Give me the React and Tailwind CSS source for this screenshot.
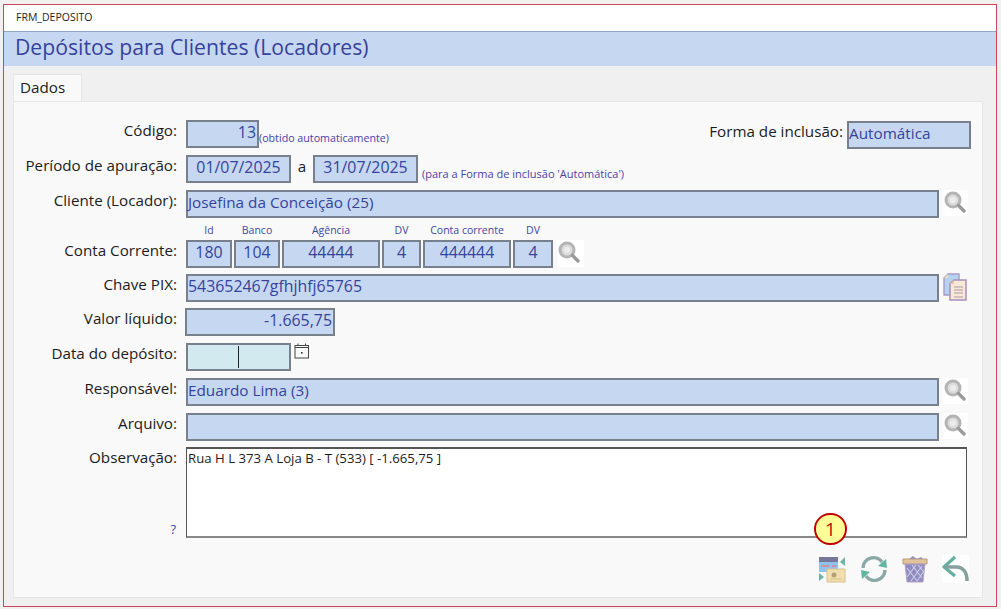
import React from "react";

function Field({ className = "", align = "text-left", size = "text-[15.3px]", children }) {
  return (
    <div className={`h-[28px] shrink-0 border-2 border-[#77808c] bg-[#c6d8f1] leading-[20px] text-[#36429c] whitespace-nowrap ${size} ${align} ${className}`}>
      {children}
    </div>
  );
}

function Label({ children }) {
  return (
    <div className="w-[163px] shrink-0 text-right text-[15.2px] leading-[20px] text-[#1c1c1c] whitespace-nowrap">
      {children}
    </div>
  );
}

function Magnifier({ className = "ml-[4px] h-[26px] w-[25px]" }) {
  return (
    <div className={`shrink-0 bg-white ${className}`}>
      <svg width="25" height="26" viewBox="1 1 25 26" className="blur-[0.4px]">
        <circle cx="11" cy="11" r="7" fill="#dcdcdc" stroke="#b4b4b4" strokeWidth="3" />
        <circle cx="11" cy="11" r="3" fill="#ededed" />
        <path d="M16.5 16.5 L22 22" stroke="#9a9a9a" strokeWidth="3.4" strokeLinecap="round" />
      </svg>
    </div>
  );
}

function CopyIcon() {
  return (
    <svg width="25" height="29" viewBox="0 0 25 29" className="ml-[4px] -mt-[1px] shrink-0 blur-[0.3px]">
      <path d="M5 1 H16 V22 H1 V5 Z" fill="#b5d2f0" stroke="#a99bc4" strokeWidth="1.4" />
      <path d="M1 5 H5 V1 Z" fill="#f2dcc0" />
      <path d="M11 7 H23 V27 H7 V11 Z" fill="#f8e8d8" stroke="#a98fb8" strokeWidth="1.5" />
      <path d="M7 11 H11 V7 Z" fill="#e3c9a8" />
      <path d="M11 14 H20 M11 17 H20 M11 20 H20 M11 24 H20" stroke="#a99ca8" strokeWidth="1.2" />
    </svg>
  );
}

function CalendarIcon() {
  return (
    <svg width="16" height="16" viewBox="0 0 16 16" className="ml-[3px] shrink-0">
      <rect x="1" y="2.5" width="13.5" height="12.5" fill="none" stroke="#444" strokeWidth="1" />
      <path d="M1 4.5 H14.5 M4 0.5 V3 M11.5 0.5 V3" stroke="#444" strokeWidth="1" />
      <rect x="7" y="9" width="1.6" height="1.6" fill="#333" />
    </svg>
  );
}

function CardsIcon() {
  return (
    <svg width="28" height="28" viewBox="0 0 28 28" className="blur-[0.4px]">
      <path d="M1 2 H20 V17 H1 Z" fill="#8fc3ee" />
      <path d="M1 2 H20 V7 H1 Z" fill="#77779a" />
      <path d="M3 11 H11 M14 11 H18" stroke="#e5808a" strokeWidth="1.6" />
      <path d="M9 14 H27 V27 H9 Z" fill="#f1dfae" stroke="#d6c18e" strokeWidth="1" />
      <circle cx="16" cy="20" r="2.5" fill="#b89f78" />
      <path d="M12 24 H24" stroke="#d6c18e" strokeWidth="1" />
      <path d="M27 2 L22 7 L27 11 Z" fill="#6eb5a5" />
      <path d="M1 18 L6 22 L1 26 Z" fill="#6eb5a5" />
    </svg>
  );
}

function SyncIcon() {
  return (
    <svg width="28" height="28" viewBox="0 0 28 28" fill="none" className="blur-[0.4px]">
      <path d="M3 13 A10.5 10.5 0 0 1 22 7" stroke="#8aa8a8" strokeWidth="3.4" />
      <path d="M18 11 L27 13 L26 4 Z" fill="#62b7a2" />
      <path d="M25 15 A10.5 10.5 0 0 1 6 21" stroke="#8aa8a8" strokeWidth="3.4" />
      <path d="M10 17 L1 15 L2 24 Z" fill="#62b7a2" />
    </svg>
  );
}

function TrashIcon() {
  return (
    <svg width="26" height="28" viewBox="0 0 26 28" className="blur-[0.4px]">
      <path d="M1 4 H25 V9 H1 Z" fill="#e2c49c" stroke="#b89a78" strokeWidth="1" />
      <path d="M7 4 L11 1 L15 4 L19 2 L21 4 Z" fill="#9a96b8" />
      <path d="M3 9 H23 L21 27 H5 Z" fill="#8f8cc0" stroke="#b9a3c4" strokeWidth="1" />
      <path d="M5 13 L15 26 M10 10 L20 23 M16 10 L22 17 M20 11 L9 26 M14 10 L5 22 M22 16 L15 26" stroke="#d0cde8" strokeWidth="1.1" />
    </svg>
  );
}

function BackIcon() {
  return (
    <div className="h-[28px] w-[27px] bg-white">
      <svg width="27" height="28" viewBox="0 0 27 28" fill="none" className="blur-[0.4px]">
        <path d="M13 2 L2 12 L13 21" stroke="#63b09f" strokeWidth="3.2" strokeLinejoin="round" />
        <path d="M3 12 H14 C21 12 25 17 25 26" stroke="#86a0a0" strokeWidth="3.6" />
      </svg>
    </div>
  );
}

function Caption({ className = "", children }) {
  return (
    <div className={`shrink-0 text-center text-[10.5px] leading-[16px] text-[#3c48a0] whitespace-nowrap ${className}`}>
      {children}
    </div>
  );
}

export default function App() {
  return (
    <div
      className="h-[609px] w-[1001px] overflow-hidden bg-[#f0f0f0] pb-[2px] pl-[3px] pr-[4px] pt-[4px]"
      style={{ fontFamily: '"Open Sans", "Noto Sans", sans-serif' }}
    >
      <div className="flex h-full flex-col border border-[#c9485b] bg-[#f0f0f0]">
        <div className="h-[26px] shrink-0 bg-white pl-[12px] text-[10.5px] leading-[25px] text-[#222]">
          FRM_DEPOSITO
        </div>
        <div className="h-[35px] shrink-0 border-t border-[#8fa9cc] bg-[#c6d8f1] pl-[11px] text-[21.2px] leading-[30px] text-[#36429c]">
          Depósitos para Clientes (Locadores)
        </div>

        <div className="flex flex-1 flex-col pb-[8px] pl-[9px] pr-[13px] pt-[8px]">
          <div className="h-[27px] w-[69px] shrink-0 border-x border-t border-[#e6e6e6] bg-[#f9f9f9] pl-[6px] text-[15.2px] leading-[25px] text-[#1c1c1c]">
            Dados
          </div>

          <div className="relative flex flex-1 flex-col border border-[#e6e6e6] bg-[#f9f9f9] pt-[18px]">
            {/* Codigo */}
            <div className="flex h-[28px] items-start">
              <Label>Código:</Label>
              <Field className="ml-[9px] w-[73px] pr-[1px]" align="text-right" size="text-[15.9px]">13</Field>
              <div className="mt-[10px] text-[10.7px] leading-[16px] text-[#4a3fa8] whitespace-nowrap">(obtido automaticamente)</div>
              <div className="ml-auto mr-[11px] mt-[1px] flex items-start">
                <div className="text-[15.2px] leading-[20px] text-[#1c1c1c] whitespace-nowrap">Forma de inclusão:</div>
                <Field className="ml-[4px] w-[124px]">Automática</Field>
              </div>
            </div>

            {/* Periodo */}
            <div className="mt-[7px] flex h-[28px] items-start">
              <Label>Período de apuração:</Label>
              <Field className="ml-[9px] w-[105px]" align="text-center" size="text-[15.9px]">01/07/2025</Field>
              <div className="w-[22px] text-center text-[15.2px] leading-[22px] text-[#1c1c1c]">a</div>
              <Field className="w-[105px]" align="text-center" size="text-[15.9px]">31/07/2025</Field>
              <div className="ml-[4px] mt-[11px] text-[11px] leading-[16px] text-[#4a3fa8] whitespace-nowrap">
                (para a Forma de inclusão 'Automática')
              </div>
            </div>

            {/* Cliente */}
            <div className="mt-[7px] flex h-[28px] items-start">
              <Label>Cliente (Locador):</Label>
              <Field className="ml-[9px] w-[753px]">Josefina da Conceição (25)</Field>
              <Magnifier />
            </div>

            {/* Captions */}
            <div className="mt-[4px] flex h-[18px] gap-[2px] pl-[172px]">
              <Caption className="w-[46px]">Id</Caption>
              <Caption className="w-[46px]">Banco</Caption>
              <Caption className="w-[98px]">Agência</Caption>
              <Caption className="w-[39px]">DV</Caption>
              <Caption className="w-[88px]">Conta corrente</Caption>
              <Caption className="w-[40px]">DV</Caption>
            </div>

            {/* Conta */}
            <div className="flex h-[28px] items-start">
              <Label>Conta Corrente:</Label>
              <div className="ml-[9px] flex gap-[2px]">
                <Field className="w-[46px]" align="text-center" size="text-[15.9px]">180</Field>
                <Field className="w-[46px]" align="text-center" size="text-[15.9px]">104</Field>
                <Field className="w-[98px]" align="text-center" size="text-[15.9px]">44444</Field>
                <Field className="w-[39px]" align="text-center" size="text-[15.9px]">4</Field>
                <Field className="w-[88px]" align="text-center" size="text-[15.9px]">444444</Field>
                <Field className="w-[40px]" align="text-center" size="text-[15.9px]">4</Field>
              </div>
              <Magnifier className="ml-[4px] h-[27px] w-[27px]" />
            </div>

            {/* Chave */}
            <div className="mt-[6px] flex h-[28px] items-start">
              <Label>Chave PIX:</Label>
              <Field className="ml-[9px] w-[753px]" size="text-[15.9px]">543652467gfhjhfj65765</Field>
              <CopyIcon />
            </div>

            {/* Valor */}
            <div className="mt-[6px] flex h-[28px] items-start">
              <Label>Valor líquido:</Label>
              <Field className="ml-[8px] w-[150px] pr-[1px]" align="text-right" size="text-[15.9px]">-1.665,75</Field>
            </div>

            {/* Data */}
            <div className="mt-[7px] flex h-[28px] items-start">
              <Label>Data do depósito:</Label>
              <div className="ml-[9px] h-[28px] w-[105px] shrink-0 border-2 border-[#77808c] bg-[#d2eaef] pl-[50px] pt-[1px]">
                <div className="h-[22px] w-[1px] bg-[#222]" />
              </div>
              <CalendarIcon />
            </div>

            {/* Responsavel */}
            <div className="mt-[7px] flex h-[28px] items-start">
              <Label>Responsável:</Label>
              <Field className="ml-[9px] w-[753px]">Eduardo Lima (3)</Field>
              <Magnifier />
            </div>

            {/* Arquivo */}
            <div className="mt-[7px] flex h-[28px] items-start">
              <Label>Arquivo:</Label>
              <Field className="ml-[9px] w-[753px]" />
              <Magnifier />
            </div>

            {/* Observacao */}
            <div className="mt-[6px] flex h-[91px] items-start">
              <div className="flex h-full w-[163px] shrink-0 flex-col justify-between">
                <Label>Observação:</Label>
                <div className="pb-[1px] pr-[1px] text-right text-[13px] leading-[16px] text-[#3c48b0]">?</div>
              </div>
              <div className="ml-[9px] h-full w-[781px] shrink-0 border-x border-b-2 border-t-2 border-x-[#555] border-b-[#888] border-t-[#555] bg-white pl-[1px] text-[13.2px] leading-[18px] text-[#1c1c1c] whitespace-nowrap">
                Rua H L 373 A Loja B - T (533) [ -1.665,75 ]
              </div>
            </div>

            {/* Botoes */}
            <div className="mt-[17px] flex items-start justify-end gap-[14px] pr-[13px]">
              <CardsIcon />
              <SyncIcon />
              <TrashIcon />
              <BackIcon />
            </div>

            <div className="absolute left-[800px] top-[411px] flex h-[32px] w-[33px] items-center justify-center rounded-full border-2 border-[#c00000] bg-[#ffff99] text-[19px] text-[#b01010]">
              1
            </div>
          </div>
        </div>
      </div>
    </div>
  );
}
